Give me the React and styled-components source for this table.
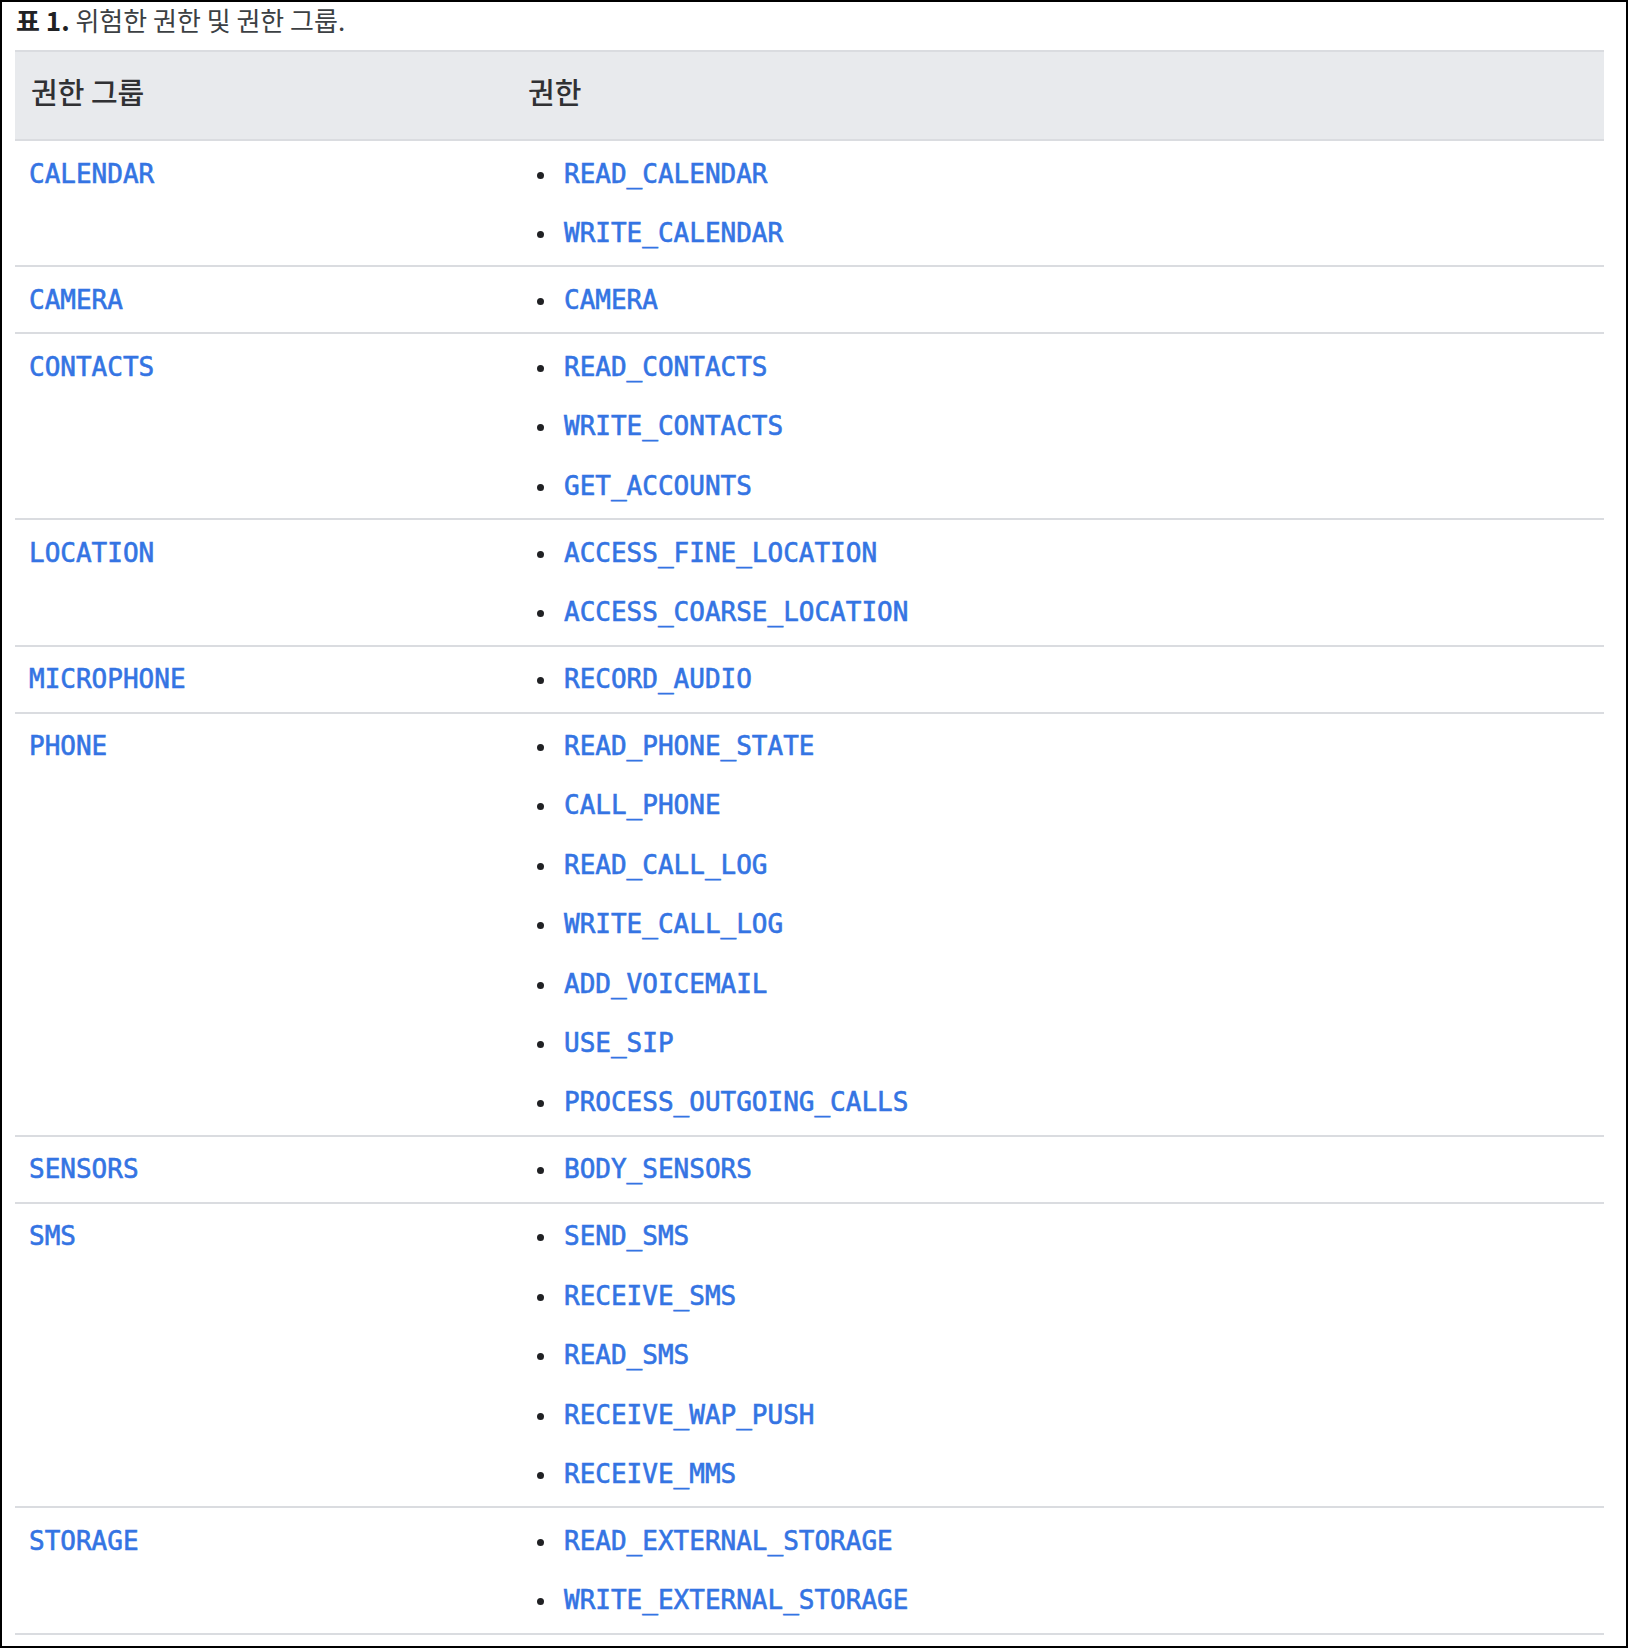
import React from "react";
import styled, { createGlobalStyle } from "styled-components";

const GlobalStyle = createGlobalStyle`
  html, body { margin: 0; padding: 0; background: #fff; }
  body { font-family: "Noto Sans CJK KR", "Noto Sans", sans-serif; color: #202124; }
`;

const groups = [
  { name: "CALENDAR", perms: ["READ_CALENDAR", "WRITE_CALENDAR"] },
  { name: "CAMERA", perms: ["CAMERA"] },
  { name: "CONTACTS", perms: ["READ_CONTACTS", "WRITE_CONTACTS", "GET_ACCOUNTS"] },
  { name: "LOCATION", perms: ["ACCESS_FINE_LOCATION", "ACCESS_COARSE_LOCATION"] },
  { name: "MICROPHONE", perms: ["RECORD_AUDIO"] },
  {
    name: "PHONE",
    perms: [
      "READ_PHONE_STATE",
      "CALL_PHONE",
      "READ_CALL_LOG",
      "WRITE_CALL_LOG",
      "ADD_VOICEMAIL",
      "USE_SIP",
      "PROCESS_OUTGOING_CALLS",
    ],
  },
  { name: "SENSORS", perms: ["BODY_SENSORS"] },
  {
    name: "SMS",
    perms: ["SEND_SMS", "RECEIVE_SMS", "READ_SMS", "RECEIVE_WAP_PUSH", "RECEIVE_MMS"],
  },
  { name: "STORAGE", perms: ["READ_EXTERNAL_STORAGE", "WRITE_EXTERNAL_STORAGE"] },
];

const Frame = styled.div`
  box-sizing: border-box;
  width: 1628px;
  height: 1648px;
  border: 2px solid #000;
  padding: 0 22px 0 13px;
`;

const Caption = styled.div`
  font-size: 26px;
  line-height: 36px;
  margin-bottom: 12px;
  padding-left: 1px;
  color: #3c4043;
  font-weight: 400;

  b { font-weight: 700; color: #202124; }
`;

const Table = styled.div`
  display: grid;
  grid-template-columns: 497px 1fr;
`;

const HeadCell = styled.div`
  background: #e8eaed;
  border-top: 2px solid #dadce0;
  border-bottom: 2px solid #dadce0;
  padding: 11px 16px 20px;
  line-height: 56px;
  font-size: 29px;
  font-weight: 500;
  color: #303134;
`;

const Cell = styled.div`
  padding: 12.5px 16px 12.5px 14px;
  border-bottom: 2px solid #dadce0;
`;

const Code = styled.span`
  font-family: "DejaVu Sans Mono", "Liberation Mono", monospace;
  font-size: 26px;
  line-height: 40px;
  color: #3474e3;
  font-weight: 400;
  -webkit-text-stroke: 0.6px #3474e3;
`;

const PermList = styled.ul`
  list-style: none;
  margin: 0 0 0 2px;
  padding: 0;
  display: flex;
  flex-direction: column;
  gap: 19.4px;
`;

const PermItem = styled.li`
  display: flex;
  align-items: center;
  height: 40px;
`;

const Bullet = styled.span`
  width: 7px;
  height: 7px;
  border-radius: 50%;
  background: #202124;
  margin: 3px 20px 0 9px;
  flex: none;
`;

export default function App() {
  return (
    <>
      <GlobalStyle />
      <Frame>
        <Caption>
          <b>표 1.</b> 위험한 권한 및 권한 그룹.
        </Caption>
        <Table>
          <HeadCell>권한 그룹</HeadCell>
          <HeadCell>권한</HeadCell>
          {groups.map((g) => (
            <React.Fragment key={g.name}>
              <Cell>
                <Code>{g.name}</Code>
              </Cell>
              <Cell>
                <PermList>
                  {g.perms.map((p) => (
                    <PermItem key={p}>
                      <Bullet />
                      <Code>{p}</Code>
                    </PermItem>
                  ))}
                </PermList>
              </Cell>
            </React.Fragment>
          ))}
        </Table>
      </Frame>
    </>
  );
}
